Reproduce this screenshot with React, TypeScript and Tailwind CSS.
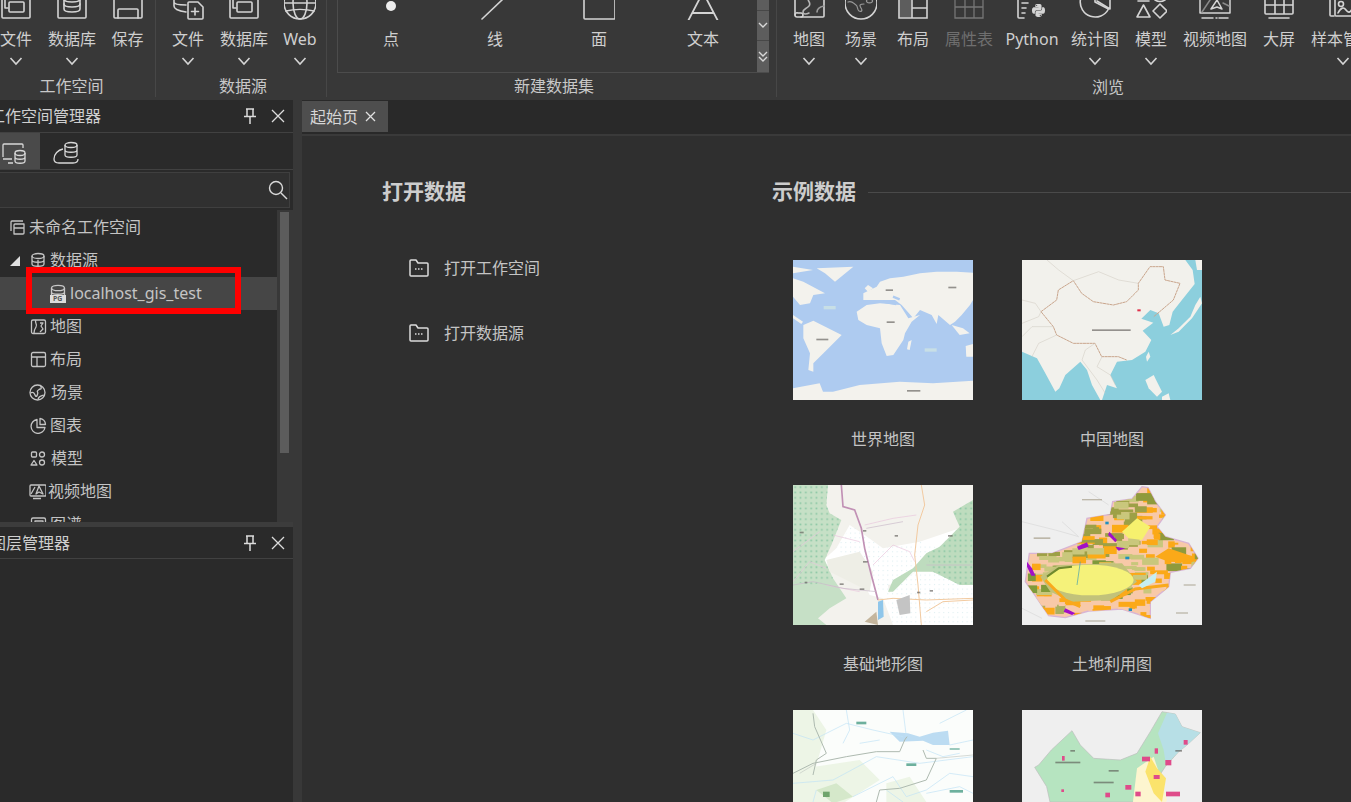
import React from "react";
import { FaPython } from "react-icons/fa";

const S = ({ w = 32, h = 32, vb, children, sw = 1.6 }: any) => (
  <svg width={w} height={h} viewBox={vb || `0 0 ${w} ${h}`} fill="none" stroke="currentColor" strokeWidth={sw} strokeLinecap="round" strokeLinejoin="round">{children}</svg>
);

const Chevron = () => (
  <svg width="14" height="10" viewBox="0 0 14 10" fill="none" stroke="#d4d4d4" strokeWidth="1.6"><path d="M1.5 2 7 8l5.5-6" /></svg>
);

const I = {
  fileStack: <S><path d="M2 0v17q0 1 1 1h26q1 0 1-1V0" /><rect x="9" y="2" width="15" height="10" rx="1" /><path d="M5 -2v10h3" /></S>,
  db: <S><path d="M2 0v17q0 1 1 1h26q1 0 1-1V0" /><path d="M8 0v9c0 4 16 4 16 0V0" /><path d="M8 4c0 4 16 4 16 0M8 -1c0 4 16 4 16 0" /></S>,
  save: <S><path d="M2 0v17q0 1 1 1h26q1 0 1-1V0" /><path d="M6 18V10q0-1 1-1h18q1 0 1 1v8" /></S>,
  dbNew: <S><path d="M2 -4v10c0 3 5 5 12 6M2 2c0 2 5 3 12 3" /><path d="M17 2h9l5 5v11q0 1-1 1H17q-1 0-1-1V3q0-1 1-1z" /><path d="M23 8v7M19.500 11.500h7" /></S>,
  globe: <S><circle cx="16" cy="3" r="16" /><ellipse cx="16" cy="3" rx="7" ry="16" /><path d="M0 3h32M2 11c8 -2 20 -2 28 0" /></S>,
  map: <S><path d="M2 -2v17a2 2 0 0 0 2 2h26a1 1 0 0 0 1-1V-2" /><path d="M2 15a2 2 0 0 1 3-2h3a2 2 0 0 1 0 4" /><path d="M16-2c-3 3 3 4 0 8-3 3-6 3-6 6s4 2 6 1" stroke="#b5b5b5" /><path d="M31 6c-5 1-7 3-7 6" stroke="#9a9a9a" /></S>,
  scene: <S><circle cx="16" cy="3" r="16" /><path d="M3 2c4-2 6 2 8 3s1 5 3 6 4 0 2-3-1-4 3-4M24 -1a3 2 0 1 0 1 0" strokeWidth="1.200" stroke="#9a9a9a" /></S>,
  layout: <svg width="32" height="32" viewBox="0 0 32 32" fill="none" stroke="#d4d4d4" strokeWidth="1.600"><rect x="2.500" y="0" width="12" height="17.500" fill="#5d5d5d" stroke="none" /><path d="M2 0v18h28V0M15 0v18M15 8h15" /></svg>,
  grid: <svg width="32" height="32" viewBox="0 0 32 32" fill="none" stroke="#767676" strokeWidth="1.300"><path d="M2 -2v20h28V-2M12 -2v20M21 -2v20M2 7h28" /></svg>,
  python: (
    <div className="relative w-[32px] h-[32px] text-[#d4d4d4]">
      <S><path d="M2 -2v19a1 1 0 0 0 1 1h5M6 3h6M6 8h4M6 13h3" /></S>
      <FaPython className="absolute left-[15px] top-[3px] text-[15px]" />
    </div>
  ),
  pie: <S><path d="M16-13A15 15 0 1 0 29.500 9L16 2Z" /><path d="M31-5V9L18 1" /></S>,
  model: <S><path d="M8.500 5 15 17H2Z" /><path d="M25 4l7 7-7 7-7-7Z" /><path d="M3 1h11M20 0q5 3 10 0" /></S>,
  video: <S sw={1.500}><path d="M1-2v15h30V-2" /><path d="M18 0l5 9-5-2-6 2z" /><path d="M3 12l8-12M24 3l6 3" stroke="#8a8a8a" /><path d="M3 18h11M17 18h1M20 18h9" /></S>,
  screen: <S><path d="M2-2v15q0 1 1 1h26q1 0 1-1V-2M2 5h28M12-2v16M21-2v16M6 18h20" /></S>,
  sample: <S><path d="M3-2v17q0 1 1 1h3" /><path d="M8-2v17q0 1 1 1h23" /><circle cx="14" cy="4" r="2.500" /><path d="M11 13c3-6 6-6 8-3s4 3 6-1" /></S>,
  dot: <svg width="32" height="32" viewBox="0 0 32 32"><circle cx="16" cy="6" r="5" fill="#ededed" /></svg>,
  line: <S><path d="M3 19 24-1" /></S>,
  face: <S><path d="M1-2v20q0 1 1 1h29q1 0 1-1V-2" /></S>,
  text: <S sw={1.800}><path d="M1 21 13-2h6l12 23M6 13h20" /></S>,
};

type Btn = { w: number; label: string; icon: React.ReactNode; more?: boolean; dim?: boolean };

const RibbonButton = ({ b }: { b: Btn }) => (
  <div className="flex flex-col items-center shrink-0" style={{ width: b.w }}>
    <div className="h-[20px] flex items-start justify-center overflow-hidden text-[#d4d4d4] w-[32px]">{b.icon}</div>
    <div className={`mt-[8px] h-[22px] leading-[22px] text-[16px] whitespace-nowrap ${b.dim ? "text-[#6f6f6f]" : "text-[#cfcfcf]"}`}>{b.label}</div>
    {b.more && <div className="mt-[6px] h-[10px] flex"><Chevron /></div>}
  </div>
);

const Group = ({ label, cls, btns, children }: { label: string; cls: string; btns?: Btn[]; children?: React.ReactNode }) => (
  <div className={`flex flex-col shrink-0 ${cls}`}>
    <div className="h-[76px] flex overflow-visible">
      {btns && btns.map((b, i) => <RibbonButton key={i} b={b} />)}
      {children}
    </div>
    <div className="h-[22px] leading-[22px] text-[16px] text-[#c8c8c8] text-center">{label}</div>
  </div>
);

const Pin = () => (
  <svg width="14" height="18" viewBox="0 0 14 18" fill="none" stroke="#dcdcdc" strokeWidth="1.500"><path d="M3 2h8M4 2v7M10 2v7M1 9.500h12M7 10v7" /></svg>
);
const XIcon = () => (
  <svg width="14" height="14" viewBox="0 0 14 14" fill="none" stroke="#dcdcdc" strokeWidth="1.300"><path d="m1 1 12 12M13 1 1 13" /></svg>
);

const PanelHeader = ({ title, ml, cls = "h-[33px]" }: { title: string; ml: string; cls?: string }) => (
  <div className={`${cls} flex items-center border-b border-[#414141] shrink-0`}>
    <span className={`text-[16px] text-[#cfcfcf] whitespace-nowrap ${ml}`}>{title}</span>
    <div className="ml-auto flex items-center gap-[14px] pr-[8px]"><Pin /><XIcon /></div>
  </div>
);

const t16 = (c: React.ReactNode) => (
  <svg width="17" height="17" viewBox="0 0 17 17" fill="none" stroke="#c4c4c4" strokeWidth="1.300" strokeLinejoin="round">{c}</svg>
);

const tree = [
  { label: "未命名工作空间", pl: "pl-[9px]", gap: "gap-[3px]", icon: t16(<><path d="M2 12V3q0-1 1-1h11" /><path d="M5 15V6q0-1 1-1h9v9q0 1-1 1zM5 9h10" /></>) },
  { label: "数据源", pl: "pl-[10px]", gap: "gap-[3px]", tri: true, icon: t16(<><ellipse cx="8" cy="4" rx="6" ry="2.500" /><path d="M2 4v8c0 3 12 3 12 0V4M2 8c0 3 12 3 12 0M8 8v7" /></>) },
  { label: "localhost_gis_test", pl: "pl-[49px]", gap: "gap-[3px]", sel: true, icon: (
    <div className="relative w-[18px] h-[20px]">
      <svg width="18" height="20" viewBox="0 0 18 20" fill="none" stroke="#c8c8c8" strokeWidth="1.300"><ellipse cx="9" cy="4" rx="6.500" ry="2.700" /><path d="M2.500 4v8M15.500 4v8M2.500 8c0 3 13 3 13 0" /><rect x="1" y="11" width="16" height="8" fill="#dcdcdc" stroke="none" /></svg>
      <span className="absolute left-[4px] top-[11px] text-[7px] leading-[8px] font-bold text-[#555]">PG</span>
    </div>
  ) },
  { label: "地图", pl: "pl-[30px]", gap: "gap-[3px]", icon: t16(<><rect x="1.500" y="2" width="14" height="13.500" rx="1.500" /><path d="M6 2c-2 3 2 4 0 7s-2 3-2 6M10 5h3l-2 3 2 3-3 3" /></>) },
  { label: "布局", pl: "pl-[30px]", gap: "gap-[3px]", icon: t16(<><rect x="1.500" y="1.500" width="14" height="14" rx="1.500" /><path d="M1.500 6h14M7 6v9.500" /></>) },
  { label: "场景", pl: "pl-[29px]", gap: "gap-[5px]", icon: t16(<><circle cx="8.500" cy="8.500" r="7.500" /><path d="M1.500 9c3-2 4 1 5 3s3-3 2-4 2-3 3-3 1-2 0-3M9 15c1-3 3-3 6-4" /></>) },
  { label: "图表", pl: "pl-[30px]", gap: "gap-[3px]", icon: t16(<><path d="M7 2.500a7 7 0 1 0 8 8H7z" /><path d="M10 1.500a6 6 0 0 1 5.500 6H10z" /></>) },
  { label: "模型", pl: "pl-[30px]", gap: "gap-[4px]", icon: t16(<><rect x="1.500" y="2" width="5" height="5" rx="1" /><circle cx="12" cy="4.500" r="2.500" /><path d="M4 10.500 7 15H1z" /><circle cx="12" cy="12.500" r="2.500" /></>) },
  { label: "视频地图", pl: "pl-[29px]", gap: "gap-[2px]", icon: t16(<><rect x="1" y="2" width="16" height="11" rx="1" /><path d="M10 3l4 8-4-2-3 2zM2 11l4-7M4 15.500h8" /></>) },
  { label: "图谱", pl: "pl-[30px]", gap: "gap-[3px]", icon: t16(<><rect x="1.500" y="2" width="14" height="13" rx="1.500" /><path d="M5 5h8v6H5z" /></>) },
];

const FolderIcon = () => (
  <svg width="20" height="18" viewBox="0 0 20 18" fill="none" stroke="#dcdcdc" strokeWidth="1.500" strokeLinejoin="round"><path d="M1 16V2q0-1 1-1h5l2 3h9q1 0 1 1v11q0 1-1 1H2q-1 0-1-1zM6 10h1.500M9 10h1.500M12 10h1.500" /></svg>
);

const Blips = ({ pts }: { pts: number[][] }) => (
  <g fill="#55524e" opacity="0.6">{pts.map((p, i) => <rect key={i} x={p[0]} y={p[1]} width={p[2]} height="5" />)}</g>
);

const mapCls = "w-full h-full block blur-[0.35px]";

const WorldMap = () => (
  <svg viewBox="0 0 540 420" className={mapCls}>
    <rect width="540" height="420" fill="#aecbf0" />
    <g fill="#f3f2ed">
      <path d="M191 155 221 135 261 130 321 135 346 175 381 165 356 185 336 220 331 240 301 285 281 288 266 250 261 205 221 195 196 180Z" />
      <path d="M261 65 291 55 331 50 381 40 431 35 491 35 540 38 540 120 531 135 506 165 486 185 471 195 436 165 431 192 416 165 381 150 361 175 326 135 306 120 211 120 211 100 251 80Z" />
      <path d="M0 55 31 65 96 100 61 105 51 130 21 135 0 110Z" />
      <path d="M71 25 181 20 126 65 96 40Z" />
      <path d="M0 20 60 30 0 40Z" />
      <path d="M0 165 30 185 25 192 0 175Z" />
      <path d="M31 195 61 182 146 225 101 270 61 310 61 335 46 330 51 280 31 235Z" />
      <path d="M0 385 80 370 90 395 120 395 200 375 320 365 420 370 540 362 540 420 0 420Z" />
      <path d="M518 258 540 252 540 290 520 290Z" />
      <path d="M346 245 356 240 350 270 342 268Z" />
      <path d="M476 195 510 205 530 220 500 225Z" />
      <path d="M215 85 225 75 240 85 225 95Z" />
    </g>
    <path d="M270 125 310 132M300 110 320 118" stroke="#aecbf0" strokeWidth="7" />
    <Blips pts={[[278,88,22],[466,80,24],[281,184,24],[70,236,36],[342,390,40]]} />
    <g fill="#c8dfe6"><rect x="92" y="138" width="36" height="10" /><rect x="395" y="265" width="36" height="10" /></g>
  </svg>
);

const ChinaMap = () => (
  <svg viewBox="0 0 540 420" className={mapCls}>
    <rect width="540" height="420" fill="#f2f1ec" />
    <g fill="#8ccfdd">
      <path d="M0 275 45 295 70 340 100 395 112 385 130 345 175 305 195 330 210 375 235 420 0 420Z" />
      <path d="M240 420 255 375 285 385 265 345 285 305 330 300 370 275 388 240 362 212 394 188 358 176 385 150 410 160 425 200 442 195 452 155 478 122 518 72 512 30 490 0 540 0 540 420Z" />
    </g>
    <g fill="#f2f1ec">
      <path d="M445 225 470 205 505 170 520 135 535 110 540 130 510 175 470 215Z" />
      <path d="M370 360 395 345 420 395 405 410 380 385Z" />
      <path d="M372 290 380 275 385 290 375 305Z" />
      <path d="M520 0 540 0 540 30 525 30Z" />
      <path d="M420 410 440 400 445 420 420 420Z" />
    </g>
    <path d="M57 155 104 120 109 90 154 62 179 100 214 125 274 135 314 125 349 90 349 70 384 20 424 20 429 60 474 70 454 120 419 150 395 170M57 155 94 200 104 225 154 250 219 250 239 290 289 290 314 300" stroke="#c9a58c" strokeWidth="3" fill="none" strokeDasharray="9 1" />
    <path d="M154 62 230 35 290 60 349 70M0 120 40 130 57 155M75 0 110 30 154 62M0 190 50 170 57 155M0 230 30 200 94 200M104 225 50 250 30 290M219 250 190 270 180 300 225 360 250 400M225 320 265 345 280 375M240 290 225 320" stroke="#cfc8bf" strokeWidth="1.500" fill="none" />
    <rect x="346" y="148" width="10" height="6" fill="#e0314a" />
    <Blips pts={[[210,208,116]]} />
  </svg>
);

const TerrainMap = () => (
  <svg viewBox="0 0 540 420" className={mapCls}>
    <defs>
      <pattern id="dots" width="16" height="16" patternUnits="userSpaceOnUse"><rect x="4" y="4" width="5" height="5" fill="#8cc7a5" /></pattern>
      <pattern id="pale" width="14" height="14" patternUnits="userSpaceOnUse"><rect x="3" y="3" width="3" height="3" fill="#d9ecef" /></pattern>
    </defs>
    <rect width="540" height="420" fill="#f3f2ed" />
    <path d="M85 230 130 190 170 120 215 150 270 190 380 170 500 130 470 215 390 240 330 290 285 300 300 420 540 420 540 300 390 260 300 420 270 340 230 330 190 250 130 250Z" fill="#ffffff" />
    <path d="M130 190 175 120 215 150 270 190 380 170 470 200 390 240 330 290 280 330 240 300 190 250Z" fill="url(#pale)" />
    <path d="M280 330 380 250 540 300 540 420 300 420Z" fill="#ffffff" />
    <path d="M280 330 380 250 540 300 540 420 300 420Z" fill="url(#pale)" />
    <path d="M0 0 105 0 100 60 110 85 145 105 115 180 95 225 120 280 160 340 110 370 75 400 100 420 0 420Z" fill="#c6e0c6" />
    <path d="M0 0 105 0 100 60 110 85 145 105 115 180 95 225 120 280 60 300 0 290Z" fill="url(#dots)" />
    <path d="M540 45 480 80 500 125 440 185 400 205 360 250 300 285 285 320 300 320 360 260 420 260 500 300 540 300Z" fill="#bedcbe" />
    <path d="M540 45 480 80 500 125 440 185 400 205 420 260 500 300 540 300Z" fill="url(#dots)" />
    <path d="M100 225 200 200 240 260 230 320 110 260Z" fill="#eeeee6" />
    <path d="M145 0 150 65 185 75 205 130 215 190 235 270 255 345" stroke="#c191b5" strokeWidth="5" fill="none" />
    <path d="M385 0 395 60 375 120 365 210 375 300 385 420M255 345 300 340 400 345 540 340M400 380 450 350 540 345" stroke="#f2caa0" strokeWidth="3" fill="none" />
    <path d="M120 150 200 170M0 290 50 230 100 250M215 120 300 100 370 90M240 240 300 180 350 200 365 230M100 300 200 320M0 200 80 140" stroke="#e8c6dd" strokeWidth="2" fill="none" />
    <path d="M0 300 60 290 150 310 250 320M220 130 330 110M400 240 540 240" stroke="#c9b8c9" strokeWidth="2" fill="none" />
    <path d="M255 350 270 345 272 395 255 405Z" fill="#8fc6ea" />
    <path d="M310 345 350 330 352 385 320 390Z" fill="#c4c4c4" />
    <path d="M215 410 250 380 255 420Z" fill="#c4b59c" />
    <Blips pts={[[20,140,12],[210,135,10],[305,150,10],[465,150,14],[210,228,14],[35,290,8],[140,295,12],[200,310,14],[372,320,10],[410,315,10]]} />
  </svg>
);

const rnd = (() => {
  let s = 12345;
  const out: number[] = [];
  for (let i = 0; i < 1800; i++) { s = (s * 16807) % 2147483647; out.push(s / 2147483647); }
  return out;
})();

const patches = Array.from({ length: 420 }, (_, i) => {
  const x = rnd[i * 4] * 540;
  const y = rnd[i * 4 + 1] * 420;
  const r = rnd[i * 4 + 2];
  const north = y < 205 && x < 340;
  const east = x > 340;
  const south = y > 320;
  let c = "#f8c9a8";
  if (north) c = r < 0.65 ? "#9da046" : r < 0.85 ? "#c9c77c" : "#fbab16";
  else if (east) c = r < 0.7 ? "#fba918" : r < 0.85 ? "#f8c9a8" : r < 0.93 ? "#c9c77c" : "#8f9a3c";
  else if (south) c = r < 0.55 ? "#f8c9a8" : r < 0.85 ? "#fba918" : "#a9b060";
  else c = r < 0.5 ? "#c9c77c" : r < 0.8 ? "#fba918" : "#7f9a3a";
  return { x, y, w: 16 + rnd[i * 4 + 3] * 40, h: 8 + r * 16, c };
});

const LandUseMap = () => (
  <svg viewBox="0 0 540 420" className={mapCls}>
    <defs>
      <clipPath id="xj"><path d="M360 5 378 8 400 50 430 90 405 125 430 155 500 175 528 220 505 250 445 262 440 305 385 350 385 400 300 372 200 378 130 398 80 392 38 330 10 290 22 205 90 205 180 170 195 100 265 88 272 50 330 42Z" /></clipPath>
    </defs>
    <rect width="540" height="420" fill="#efefef" />
    <path d="M0 110 100 135 170 155 120 110M0 370 60 400M200 20 260 60" stroke="#e0e0e0" strokeWidth="3" fill="none" />
    <path d="M360 5 378 8 400 50 430 90 405 125 430 155 500 175 528 220 505 250 445 262 440 305 385 350 385 400 300 372 200 378 130 398 80 392 38 330 10 290 22 205 90 205 180 170 195 100 265 88 272 50 330 42Z" fill="#f8c9a8" stroke="#d8b4d4" strokeWidth="4" />
    <g clipPath="url(#xj)">
      {patches.map((p, i) => <rect key={i} x={p.x} y={p.y} width={p.w} height={p.h} fill={p.c} />)}
      <path d="M300 140 345 100 385 125 360 165 320 160Z" fill="#f6f16e" />
      <path d="M55 275 110 240 300 235 345 290 270 345 150 350 85 320Z" fill="#c2c27a" />
      <ellipse cx="205" cy="285" rx="130" ry="46" fill="#f5f27a" />
      <path d="M70 285 130 345 175 365M265 350 340 312 440 300" stroke="#f9a91c" strokeWidth="9" fill="none" />
      <path d="M75 275 110 250 150 245" stroke="#6f8a2e" strokeWidth="6" fill="none" />
      <path d="M175 230 165 300" stroke="#3f9fb0" strokeWidth="2" fill="none" />
      <path d="M350 300 405 260 400 290 360 310Z" fill="#c6eef0" />
      <path d="M515 215 480 232 440 230 400 215 440 190Z" fill="#fba918" />
    </g>
    <g fill="#a20fc8">
      <path d="M165 185 195 172 200 185 170 195Z" /><path d="M262 140 285 165 280 172 258 150Z" /><path d="M280 185 310 190 290 197Z" /><path d="M15 230 30 250 40 272 28 272 15 245Z" /><path d="M130 370 160 385 150 390 125 380Z" />
    </g>
    <g fill="#1f8fc0"><rect x="250" y="110" width="10" height="8" /><rect x="310" y="215" width="12" height="8" /><rect x="320" y="370" width="10" height="8" /></g>
    <g fill="#a8a08c" opacity="0.7"><rect x="180" y="42" width="60" height="4" /><rect x="35" y="157" width="50" height="5" /><rect x="485" y="298" width="36" height="4" /><rect x="462" y="382" width="36" height="4" /><rect x="190" y="406" width="60" height="4" /></g>
  </svg>
);

const RiverMap = () => (
  <svg viewBox="0 0 540 420" className={mapCls}>
    <rect width="540" height="420" fill="#fbfdfb" />
    <path d="M0 0 60 0 100 60 60 200 0 260ZM0 180 200 150 260 210 150 280 0 276ZM280 220 350 200 400 276 280 276Z" fill="#edf5e6" />
    <path d="M70 240 130 220 180 260 120 280Z" fill="#d5e8ca" />
    <path d="M290 65 345 70 380 80 420 68 465 62 470 105 420 105 390 92 320 95Z" fill="#bcdcf2" />
    <g stroke="#bfe3f6" strokeWidth="2" fill="none">
      <path d="M0 70 60 90 160 40 240 60 330 80M160 0 170 60 150 100M330 0 340 80M440 40 520 0M470 105 540 90M0 220 120 210 250 140 380 160 540 140M70 240 60 276M180 260 300 200 340 260 400 240 470 190 540 200M280 240 330 276M400 250 500 230 540 250M200 100 260 90M400 120 450 140 500 130" />
    </g>
    <path d="M60 10 65 50 100 130 70 150 60 195M0 190 60 160 160 140 250 125 320 125 335 90 342 80M390 120 400 145 430 145 400 210 320 235 260 240 250 276" stroke="#aebab0" strokeWidth="3" fill="none" />
    <path d="M430 145 540 135M20 190 70 160" stroke="#c2c9c2" strokeWidth="2" fill="none" />
    <rect x="90" y="245" width="20" height="16" fill="#6fa46c" />
    <g fill="#4a9d86" opacity="0.8"><rect x="190" y="35" width="30" height="8" /><rect x="340" y="160" width="30" height="8" /><rect x="470" y="240" width="40" height="8" /><rect x="470" y="115" width="30" height="4" /></g>
  </svg>
);

const ThematicMap = () => (
  <svg viewBox="0 0 540 420" className={mapCls}>
    <rect width="540" height="420" fill="#efefef" />
    <path d="M38 172 50 165 88 120 150 62 175 105 215 145 295 150 345 130 385 65 420 5 460 12 480 50 535 68 495 105 470 125 430 170 410 200 430 276 84 276 74 230Z" fill="#b6e4c0" stroke="#bdbdbd" strokeWidth="2" />
    <path d="M435 8 460 12 480 50 535 68 495 105 470 125 432 165 425 120 408 70Z" fill="#b7dfe6" />
    <path d="M345 175 395 140 420 215 435 270 420 300 330 300Z" fill="#fdf5cf" />
    <path d="M385 140 405 175 432 205 420 276 395 250 370 185Z" fill="#fbe36c" />
    <g fill="#df4b8a">
      <rect x="360" y="140" width="24" height="14" /><rect x="398" y="115" width="10" height="16" /><rect x="430" y="150" width="18" height="16" /><rect x="485" y="90" width="12" height="14" /><rect x="432" y="245" width="42" height="14" /><rect x="250" y="248" width="14" height="14" /><rect x="310" y="225" width="18" height="14" /><rect x="340" y="245" width="16" height="14" /><rect x="395" y="195" width="18" height="12" /><rect x="120" y="138" width="8" height="14" /><rect x="118" y="238" width="8" height="8" />
    </g>
    <Blips pts={[[145,120,14],[100,155,75],[215,215,60],[260,180,30],[460,120,20]]} />
  </svg>
);

const samples = [
  { label: "世界地图", map: <WorldMap /> },
  { label: "中国地图", map: <ChinaMap /> },
  { label: "基础地形图", map: <TerrainMap /> },
  { label: "土地利用图", map: <LandUseMap /> },
  { label: "", map: <RiverMap /> },
  { label: "", map: <ThematicMap /> },
];

export default function App() {
  const font = { fontFamily: '"Noto Sans", "Noto Sans CJK SC", sans-serif' };
  return (
    <div className="w-[1351px] h-[802px] overflow-hidden flex flex-col bg-[#2b2b2b]" style={font}>
      {/* ribbon */}
      <div className="h-[100px] shrink-0 flex bg-[#383838] overflow-hidden">
        <Group label="工作空间" cls="w-[168px] ml-[-12px] border-r border-[#474747] h-[97px]" btns={[
          { w: 56, label: "文件", icon: I.fileStack, more: true },
          { w: 56, label: "数据库", icon: I.db, more: true },
          { w: 55, label: "保存", icon: I.save },
        ]} />
        <Group label="数据源" cls="w-[171px] pl-[4px] border-r border-[#474747] h-[97px]" btns={[
          { w: 56, label: "文件", icon: I.dbNew, more: true },
          { w: 56, label: "数据库", icon: I.fileStack, more: true },
          { w: 56, label: "Web", icon: I.globe, more: true },
        ]} />
        <Group label="新建数据集" cls="w-[450px] pl-[10px] pr-[5px] border-r border-[#474747] h-[97px]">
          <div className="w-[432px] h-[73px] shrink-0 flex border-l border-b border-[#4c4c4c]">
            <div className="w-[420px] flex pl-[1px]">
              {[
                { w: 104, label: "点", icon: I.dot },
                { w: 104, label: "线", icon: I.line },
                { w: 104, label: "面", icon: I.face },
                { w: 104, label: "文本", icon: I.text },
              ].map((b, i) => <RibbonButton key={i} b={b} />)}
            </div>
            <div className="w-[12px] flex flex-col bg-[#5d5d5d]">
              <div className="h-[11px] border-b border-[#474747]" />
              <div className="h-[30px] border-b border-[#474747] flex items-center justify-center">
                <svg width="10" height="7" viewBox="0 0 10 7" fill="none" stroke="#d8d8d8" strokeWidth="1.400"><path d="m1 1 4 4 4-4" /></svg>
              </div>
              <div className="flex-1 flex items-center justify-center">
                <svg width="10" height="11" viewBox="0 0 10 11" fill="none" stroke="#d8d8d8" strokeWidth="1.400"><path d="m1 1 4 4 4-4M1 6l4 4 4-4" /></svg>
              </div>
            </div>
          </div>
        </Group>
        <Group label="浏览" cls="w-[656px] pl-[6px]" btns={[
          { w: 52, label: "地图", icon: I.map, more: true },
          { w: 52, label: "场景", icon: I.scene, more: true },
          { w: 52, label: "布局", icon: I.layout },
          { w: 60, label: "属性表", icon: I.grid, dim: true },
          { w: 66, label: "Python", icon: I.python },
          { w: 60, label: "统计图", icon: I.pie, more: true },
          { w: 52, label: "模型", icon: I.model, more: true },
          { w: 76, label: "视频地图", icon: I.video },
          { w: 52, label: "大屏", icon: I.screen },
          { w: 76, label: "样本管理", icon: I.sample, more: true },
        ]} />
      </div>

      <div className="flex-1 flex min-h-0">
        {/* sidebar */}
        <div className="w-[293px] shrink-0 flex flex-col relative overflow-hidden bg-[#2a2a2a]">
          <PanelHeader title="工作空间管理器" ml="ml-[-11px]" />
          <div className="h-[37px] shrink-0 flex border-b border-[#414141]">
            <div className="w-[40px] bg-[#4a4a4a] flex items-center pl-[1px] pt-[3px] text-[#d8d8d8]">
              <svg width="28" height="26" viewBox="0 0 28 26" fill="none" stroke="currentColor" strokeWidth="1.300"><path d="M2 17V5q0-1 1-1h18q1 0 1 1v3M2 19h9M7 23h5" /><ellipse cx="19" cy="13" rx="5" ry="2.500" /><path d="M14 13v8c0 3 10 3 10 0v-8M14 17c0 3 10 3 10 0" /></svg>
            </div>
            <div className="w-[52px] flex items-center justify-center pt-[3px] text-[#d8d8d8]">
              <svg width="28" height="26" viewBox="0 0 28 26" fill="none" stroke="currentColor" strokeWidth="1.300"><ellipse cx="19" cy="5" rx="6" ry="2.500" /><path d="M13 5v10c0 3 12 3 12 0V5M13 10c0 3 12 3 12 0" /><path d="M11 9c-5 1-9 5-9 10 0 3 2 4 5 4h14c3 0 5-1 5-4" /></svg>
            </div>
          </div>
          <div className="h-[40px] shrink-0 py-[2px] pr-[3px]">
            <div className="h-[36px] bg-[#303030] border border-[#3f3f3f] border-l-0 flex items-center justify-end pr-[1px]">
              <svg width="20" height="20" viewBox="0 0 20 20" fill="none" stroke="#dadada" strokeWidth="1.400"><circle cx="8" cy="8" r="6.500" /><path d="m13 13 6 6" /></svg>
            </div>
          </div>
          <div className="h-[312px] shrink-0 flex overflow-hidden">
            <div className="w-[277px] pt-[1px]">
              {tree.map((r, i) => (
                <div key={i} className={`h-[33px] flex items-center text-[16px] whitespace-nowrap ${r.pl} ${r.gap} ${r.sel ? "bg-[#464646]" : ""} text-[#c4c4c4]`}>
                  {r.tri && <svg width="10" height="10" viewBox="0 0 10 10" className="mr-[7px]"><path d="M0 10 10 0v10z" fill="#e0e0e0" /></svg>}
                  {r.icon}
                  <span className="mt-[-1px]">{r.label}</span>
                </div>
              ))}
            </div>
            <div className="w-[16px] bg-[#383838] pl-[3px] pt-[2px]">
              <div className="w-[9px] h-[241px] bg-[#5c5c5c]" />
            </div>
          </div>
          <div className="h-[5px] shrink-0 bg-[#3c3c3c]" />
          <PanelHeader title="图层管理器" ml="ml-[-10px]" cls="h-[32px]" />
          <div className="flex-1" />
          <div className="absolute left-[26px] top-[167px] w-[215px] h-[47px] border-[6px] border-[#ff0000]" />
        </div>

        {/* splitter */}
        <div className="w-[9px] shrink-0 bg-[#383838]" />

        {/* main */}
        <div className="flex-1 flex flex-col min-w-0">
          <div className="h-[34px] shrink-0 bg-[#292929] flex items-start pt-[1px]">
            <div className="w-[86px] h-[31px] bg-[#4e4e4e] flex items-center pl-[8px] gap-[7px] text-[16px] text-[#d6d6d6]">
              <span>起始页</span>
              <svg width="11" height="11" viewBox="0 0 11 11" fill="none" stroke="#e0e0e0" strokeWidth="1.300"><path d="m1 1 9 9M10 1l-9 9" /></svg>
            </div>
          </div>
          <div className="h-[2px] shrink-0 bg-[#3a3a3a]" />
          <div className="flex-1 bg-[#2f2f2f] flex pl-[80px] pt-[42px] overflow-hidden">
            <div className="w-[390px] shrink-0">
              <div className="h-[28px] leading-[28px] text-[21px] font-bold text-[#cdcdcd] mt-[-1px]">打开数据</div>
              <div className="mt-[47px] pl-[27px] flex flex-col gap-[33px]">
                {["打开工作空间", "打开数据源"].map((t) => (
                  <div key={t} className="h-[32px] flex items-center gap-[15px] text-[16px] text-[#c4c4c4]"><FolderIcon /><span>{t}</span></div>
                ))}
              </div>
            </div>
            <div className="flex-1 min-w-0">
              <div className="h-[28px] flex items-center gap-[12px]">
                <span className="text-[21px] leading-[28px] font-bold text-[#cdcdcd] whitespace-nowrap mt-[-2px]">示例数据</span>
                <div className="flex-1 h-px bg-[#4a4a4a]" />
              </div>
              <div className="mt-[54px] ml-[21px] grid grid-cols-[180px_180px] gap-x-[49px] gap-y-[35px]">
                {samples.map((s, i) => (
                  <div key={i} className="w-[180px]">
                    <div className="h-[140px] w-[180px] overflow-hidden">{s.map}</div>
                    {s.label && <div className="mt-[28px] h-[22px] leading-[22px] text-center text-[16px] text-[#c4c4c4]">{s.label}</div>}
                  </div>
                ))}
              </div>
            </div>
          </div>
        </div>
      </div>
    </div>
  );
}
